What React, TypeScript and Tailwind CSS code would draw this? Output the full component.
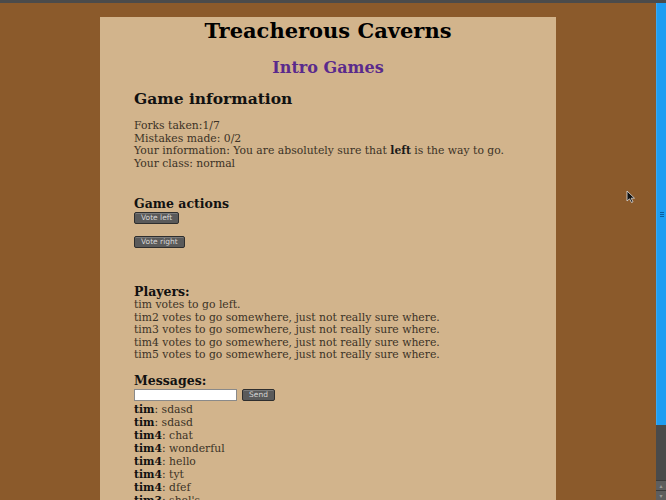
import React from "react"

const players = [
  "tim votes to go left.",
  "tim2 votes to go somewhere, just not really sure where.",
  "tim3 votes to go somewhere, just not really sure where.",
  "tim4 votes to go somewhere, just not really sure where.",
  "tim5 votes to go somewhere, just not really sure where.",
]

const messages: [string, string][] = [
  ["tim", "sdasd"],
  ["tim", "sdasd"],
  ["tim4", "chat"],
  ["tim4", "wonderful"],
  ["tim4", "hello"],
  ["tim4", "tyt"],
  ["tim4", "dfef"],
  ["tim3", "shol's"],
  ["tim3", "ok"],
]

function GameButton({ label }: { label: string }) {
  return (
    <button className="block h-[12px] px-[6px] rounded-[2px] border border-[#2e2e2e] bg-[#5a5a5a] text-[7.5px] leading-[10px] text-[#d8d8d8] font-['DejaVu_Sans',sans-serif] shadow-[inset_0_1px_0_#7a7a7a]">
      {label}
    </button>
  )
}

function Cursor() {
  return (
    <svg className="absolute left-[626px] top-[190px]" width="10" height="14" viewBox="0 0 10 14">
      <path d="M1 1 L1 11 L3.5 8.8 L5.5 12.5 L7 11.8 L5.2 8.2 L8.5 8.2 Z" fill="#111" stroke="#ddd" strokeWidth="0.8" />
    </svg>
  )
}

function Scrollbar() {
  return (
    <div className="w-[10px] flex flex-col bg-[#4a4a4a]">
      <div className="h-[422px] bg-[#1e9df2] border-l border-[#3aaaf5] flex items-center justify-center">
        <div className="flex flex-col gap-[1px]">
          <div className="w-[4px] h-[1px] bg-[#0b5fa0]" />
          <div className="w-[4px] h-[1px] bg-[#0b5fa0]" />
          <div className="w-[4px] h-[1px] bg-[#0b5fa0]" />
        </div>
      </div>
      <div className="flex-1" />
      <div className="h-[10px] bg-[#5e5e5e] border-t border-[#3a3a3a] text-[6px] leading-[9px] text-center text-[#999]">▴</div>
      <div className="h-[10px] bg-[#5e5e5e] border-t border-[#3a3a3a] text-[6px] leading-[9px] text-center text-[#999]">▾</div>
    </div>
  )
}

export default function App() {
  return (
    <div className="relative w-[666px] h-[500px] overflow-hidden flex flex-col bg-[#8b5a2b] font-['DejaVu_Serif',serif]">
      <div className="h-[3px] bg-[#4b4b4b]" />
      <div className="flex flex-1 min-h-0">
        <div className="flex-1 pl-[100px] pr-[100px] pt-[14px]">
          <div className="h-full bg-[#d2b48c] px-[34px] text-[#3b3226]">
            <h1 className="pt-[1px] text-center text-[21px] leading-[26px] font-bold text-black">
              Treacherous Caverns
            </h1>
            <h2 className="mt-[14px] text-center text-[16px] leading-[20px] font-bold text-[#5a2a8c]">
              Intro Games
            </h2>
            <h3 className="mt-[11px] text-[15.5px] leading-[20px] font-bold text-[#111]">Game information</h3>

            <div className="mt-[11px] text-[10.8px] leading-[12.5px]">
              <div>Forks taken:1/7</div>
              <div>Mistakes made: 0/2</div>
              <div>
                Your information: You are absolutely sure that <b className="text-[#1a1a1a]">left</b> is the way to go.
              </div>
              <div>Your class: normal</div>
            </div>

            <h3 className="mt-[27px] text-[12.5px] leading-[14px] font-bold text-[#111]">Game actions</h3>
            <div className="mt-[1px] flex flex-col items-start gap-[12px]">
              <GameButton label="Vote left" />
              <GameButton label="Vote right" />
            </div>

            <h3 className="mt-[37px] text-[12.5px] leading-[14px] font-bold text-[#111]">Players:</h3>
            <div className="text-[10.8px] leading-[12.5px]">
              {players.map((p, i) => (
                <div key={i}>{p}</div>
              ))}
            </div>

            <h3 className="mt-[12px] text-[12.5px] leading-[14px] font-bold text-[#111]">Messages:</h3>
            <div className="mt-[1px] flex items-center gap-[5px]">
              <input className="w-[103px] h-[12px] bg-white border border-[#8a8a8a] outline-none" />
              <GameButton label="Send" />
            </div>
            <div className="mt-[2px] text-[10.8px] leading-[13px]">
              {messages.map(([who, text], i) => (
                <div key={i}>
                  <b className="text-[#111]">{who}</b>: {text}
                </div>
              ))}
            </div>
          </div>
        </div>
        <Scrollbar />
      </div>
      <Cursor />
    </div>
  )
}
